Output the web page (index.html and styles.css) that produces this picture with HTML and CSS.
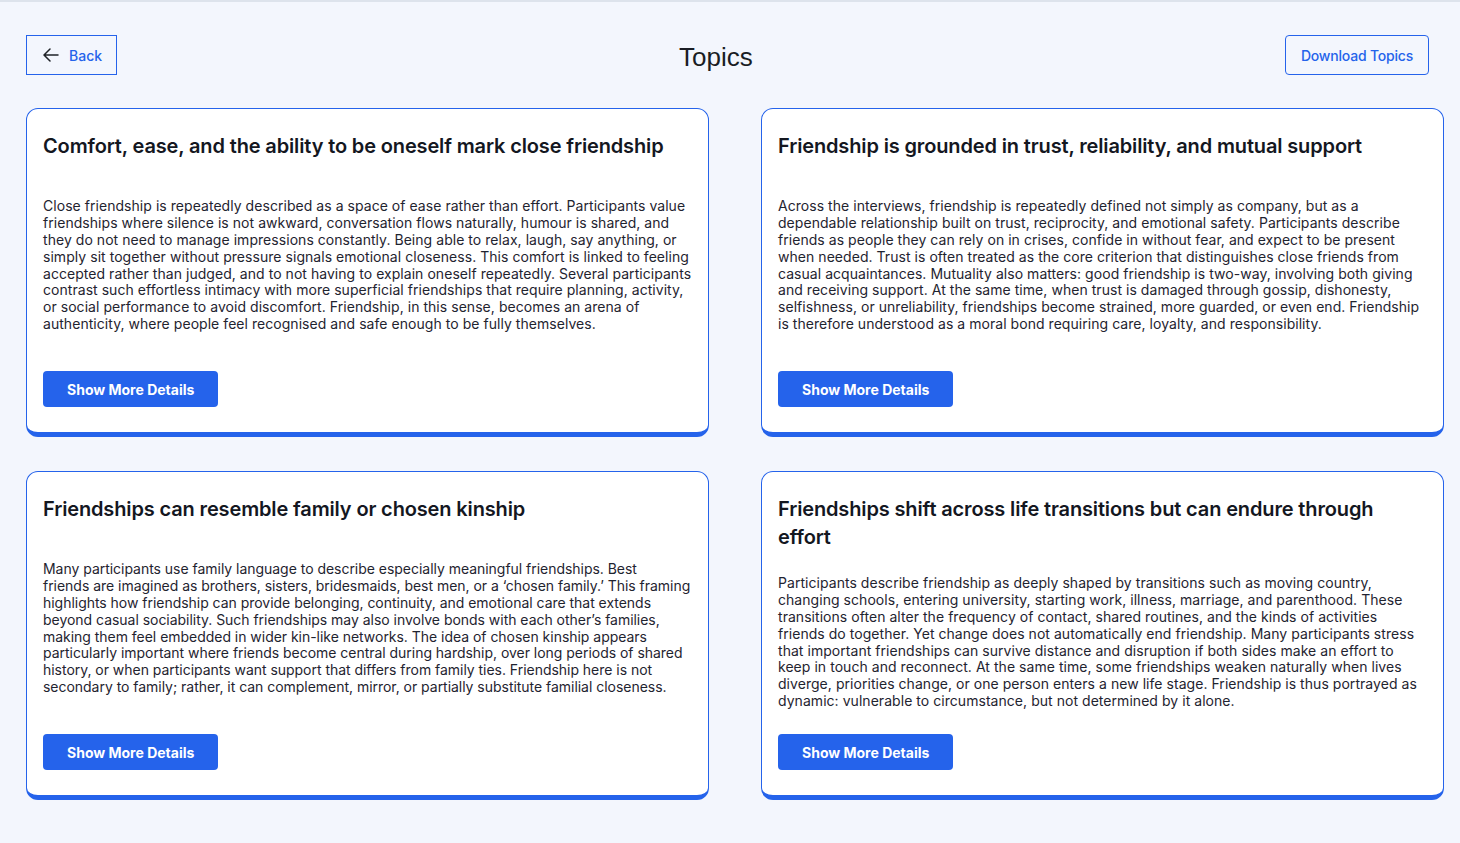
FILE: index.html
```html
<!DOCTYPE html>
<html lang="en">
<head>
<meta charset="utf-8">
<title>Topics</title>
<link rel="stylesheet" href="styles.css">
</head>
<body>
<div class="topbar"></div>
<div class="page">
  <header class="header">
    <button class="btn-back" type="button">
      <svg class="arrow" width="16" height="14" viewBox="0 0 16 14" fill="none" stroke="#1f2328" stroke-width="1.5" stroke-linecap="round" stroke-linejoin="round"><path d="M15 7H1.5M7 1L1 7l6 6"/></svg>
      <span>Back</span>
    </button>
    <h1 class="page-title">Topics</h1>
    <button class="btn-outline" type="button">Download Topics</button>
  </header>

  <main class="grid">
    <article class="card">
      <h2 class="card-title">Comfort, ease, and the ability to be oneself mark close friendship</h2>
      <p class="card-text">Close friendship is repeatedly described as a space of ease rather than effort. Participants value friendships where silence is not awkward, conversation flows naturally, humour is shared, and they do not need to manage impressions constantly. Being able to relax, laugh, say anything, or simply sit together without pressure signals emotional closeness. This comfort is linked to feeling accepted rather than judged, and to not having to explain oneself repeatedly. Several participants contrast such effortless intimacy with more superficial friendships that require planning, activity, or social performance to avoid discomfort. Friendship, in this sense, becomes an arena of authenticity, where people feel recognised and safe enough to be fully themselves.</p>
      <div><button class="btn-primary" type="button">Show More Details</button></div>
    </article>

    <article class="card">
      <h2 class="card-title">Friendship is grounded in trust, reliability, and mutual support</h2>
      <p class="card-text">Across the interviews, friendship is repeatedly defined not simply as company, but as a dependable relationship built on trust, reciprocity, and emotional safety. Participants describe friends as people they can rely on in crises, confide in without fear, and expect to be present when needed. Trust is often treated as the core criterion that distinguishes close friends from casual acquaintances. Mutuality also matters: good friendship is two-way, involving both giving and receiving support. At the same time, when trust is damaged through gossip, dishonesty, selfishness, or unreliability, friendships become strained, more guarded, or even end. Friendship is therefore understood as a moral bond requiring care, loyalty, and responsibility.</p>
      <div><button class="btn-primary" type="button">Show More Details</button></div>
    </article>

    <article class="card">
      <h2 class="card-title">Friendships can resemble family or chosen kinship</h2>
      <p class="card-text card-text--snug">Many participants use family language to describe especially meaningful friendships. Best friends&nbsp;are imagined as brothers, sisters, bridesmaids, best men, or a ‘chosen family.’ This framing highlights how friendship can provide belonging, continuity, and emotional care that extends beyond casual sociability. Such friendships may also involve bonds with each other’s families, making them feel embedded in wider kin-like networks. The idea of chosen kinship appears particularly important where friends become central during hardship, over long periods of shared history, or when participants want support that differs from family ties. Friendship here is not secondary to family; rather, it can complement, mirror, or partially substitute familial closeness.</p>
      <div><button class="btn-primary" type="button">Show More Details</button></div>
    </article>

    <article class="card">
      <h2 class="card-title">Friendships shift across life transitions but can endure through effort</h2>
      <p class="card-text">Participants describe friendship as deeply shaped by transitions such as moving country, changing schools, entering university, starting work, illness, marriage, and parenthood. These transitions often alter the frequency of contact, shared routines, and the kinds of activities friends do together. Yet change does not automatically end friendship. Many participants stress that important friendships can survive distance and disruption if both sides make an effort to keep in touch and reconnect. At the same time, some friendships weaken naturally when lives diverge, priorities change, or one person enters a new life stage. Friendship is thus portrayed as dynamic: vulnerable to circumstance, but not determined by it alone.</p>
      <div><button class="btn-primary" type="button">Show More Details</button></div>
    </article>
  </main>
</div>
</body>
</html>
```
FILE: styles.css
```css
* { box-sizing: border-box; }

html, body {
  margin: 0;
  padding: 0;
}

body {
  background: #f3f6fd;
  font-family: Inter, "Noto Sans", sans-serif;
  color: #1f2430;
  min-height: 843px;
}

.topbar {
  height: 2px;
  background: #dde3ec;
}

.page {
  padding: 33px 16px 40px 26px;
}

.header {
  display: flex;
  align-items: center;
  padding-right: 15px;
  height: 40px;
}

.btn-back {
  display: flex;
  align-items: center;
  gap: 10px;
  height: 40px;
  padding: 0 14px 0 16px;
  background: transparent;
  border: 1px solid #2563eb;
  border-radius: 0;
  color: #2563eb;
  font-family: Inter, sans-serif;
  font-size: 14px;
  font-weight: 500;
  cursor: pointer;
}

.arrow { display: block; }

.page-title {
  flex: 1;
  margin: 0;
  padding-left: 30px;
  text-align: center;
  font-family: "Liberation Sans", Arial, sans-serif;
  font-size: 26px;
  font-weight: 400;
  color: #1a1d24;
  line-height: 44px;
  position: relative;
  top: 2px;
}

.btn-outline {
  height: 40px;
  padding: 0 15px;
  background: transparent;
  border: 1px solid #2563eb;
  border-radius: 4px;
  color: #2563eb;
  font-family: Inter, sans-serif;
  font-size: 14px;
  font-weight: 500;
  letter-spacing: -0.2px;
  cursor: pointer;
}

.grid {
  margin-top: 33px;
  display: grid;
  grid-template-columns: 1fr 1fr;
  column-gap: 52px;
  row-gap: 34px;
}

.card {
  height: 329px;
  display: flex;
  flex-direction: column;
  justify-content: space-between;
  background: #ffffff;
  border: 1px solid #2563eb;
  border-bottom-width: 5px;
  border-radius: 12px;
  padding: 23px 16px 25px;
}

.card-title {
  margin: 0;
  font-size: 20px;
  font-weight: 600;
  line-height: 28px;
  letter-spacing: -0.14px;
  color: #14171f;
}

.card-text {
  margin: 0;
  font-size: 14px;
  line-height: 16.8px;
  letter-spacing: 0.045px;
  color: #1f2430;
}

.card-text--snug {
  letter-spacing: -0.03px;
}

.btn-primary {
  height: 36px;
  padding: 0 24px;
  background: #2563eb;
  color: #ffffff;
  border: none;
  border-radius: 4px;
  font-family: Inter, sans-serif;
  font-size: 14px;
  font-weight: 700;
  cursor: pointer;
}
```
